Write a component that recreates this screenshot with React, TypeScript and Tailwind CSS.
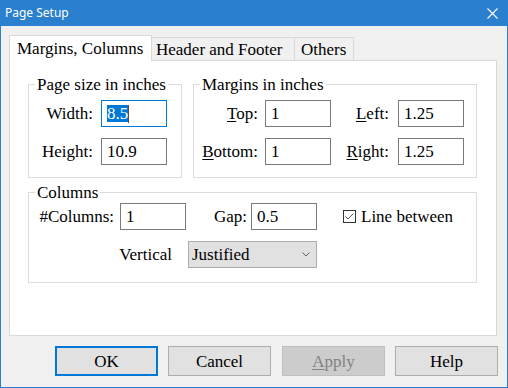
export default function App() {
  const inputBase =
    "h-[27px] w-[66px] border bg-white pl-[5px] flex items-center";
  return (
    <div className="w-[508px] h-[388px] flex flex-col bg-[#f0f0f0] border-x border-b border-[#2b7fcf] [font-family:'Liberation_Serif','Times_New_Roman',serif] text-[17px] text-black leading-none">
      {/* Title bar */}
      <div className="h-[26px] shrink-0 bg-[#2b7fcf] flex items-center justify-between pl-[4px] pr-[9px]">
        <span className="[font-family:'Noto_Sans',sans-serif] text-[12px] text-white">
          Page Setup
        </span>
        <svg width="11" height="11" viewBox="0 0 11 11">
          <path
            d="M0.5 0.5 L10.5 10.5 M10.5 0.5 L0.5 10.5"
            stroke="white"
            strokeWidth="1.1"
          />
        </svg>
      </div>

      {/* Tabs */}
      <div className="pl-[8px] pt-[9px]">
        <div className="flex items-end h-[25px]">
          <div className="relative z-10 -mb-px h-[26px] w-[143px] bg-white border-l border-t border-r border-[#d9d9d9] pl-[7px] pt-[4px]">
            Margins, Columns
          </div>
          <div className="h-[23px] w-[143px] border-t border-r border-[#d9d9d9] pl-[4px] pt-[3px]">
            Header and Footer
          </div>
          <div className="h-[23px] w-[59px] border-t border-r border-[#d9d9d9] pl-[6px] pt-[3px]">
            Others
          </div>
        </div>

        {/* Panel */}
        <div className="w-[488px] h-[276px] bg-white border border-[#d9d9d9] pl-[18px] pt-[23px]">
          <div className="flex gap-[11px]">
            {/* Page size */}
            <div className="relative w-[154px] h-[94px] border border-[#dcdcdc] pt-[15px]">
              <span className="absolute left-[6px] -top-[9px] bg-white px-[2px]">
                Page size in inches
              </span>
              <div className="grid grid-cols-[72px_66px] gap-y-[11px] items-center">
                <div className="text-right pr-[8px]">Width:</div>
                <div className={inputBase + " border-[#0078d7]"}>
                  <span className="bg-[#0078d7] text-white">8.5</span>
                  <span className="w-px h-[18px] bg-[#6b4a2a]"></span>
                </div>
                <div className="text-right pr-[8px]">Height:</div>
                <div className={inputBase + " border-[#7a7a7a]"}>10.9</div>
              </div>
            </div>

            {/* Margins */}
            <div className="relative w-[284px] h-[94px] border border-[#dcdcdc] pt-[15px]">
              <span className="absolute left-[6px] -top-[9px] bg-white px-[2px]">
                Margins in inches
              </span>
              <div className="grid grid-cols-[71px_66px_67px_66px] gap-y-[11px] items-center">
                <div className="text-right pr-[7px]">
                  <span className="underline underline-offset-2">T</span>op:
                </div>
                <div className={inputBase + " border-[#7a7a7a]"}>1</div>
                <div className="text-right pr-[9px]">
                  <span className="underline underline-offset-2">L</span>eft:
                </div>
                <div className={inputBase + " border-[#7a7a7a]"}>1.25</div>
                <div className="text-right pr-[7px]">
                  <span className="underline underline-offset-2">B</span>ottom:
                </div>
                <div className={inputBase + " border-[#7a7a7a]"}>1</div>
                <div className="text-right pr-[9px]">
                  <span className="underline underline-offset-2">R</span>ight:
                </div>
                <div className={inputBase + " border-[#7a7a7a]"}>1.25</div>
              </div>
            </div>
          </div>

          {/* Columns */}
          <div className="relative mt-[14px] w-[449px] h-[91px] border border-[#dcdcdc] pt-[10px]">
            <span className="absolute left-[6px] -top-[9px] bg-white px-[2px]">
              Columns
            </span>
            <div className="flex items-center h-[27px]">
              <div className="w-[91px] text-right pr-[6px]">#Columns:</div>
              <div className={inputBase + " border-[#7a7a7a]"}>1</div>
              <div className="w-[65px] text-right pr-[4px]">Gap:</div>
              <div className={inputBase + " border-[#7a7a7a]"}>0.5</div>
              <div className="ml-[26px] w-[13px] h-[13px] border border-[#333333] bg-white flex items-center justify-center">
                <svg width="11" height="11" viewBox="0 0 11 11">
                  <polyline
                    points="1.5,5.5 4,8 9.5,2.5"
                    fill="none"
                    stroke="#555555"
                    strokeWidth="1"
                  />
                </svg>
              </div>
              <div className="ml-[5px]">Line between</div>
            </div>
            <div className="flex items-center mt-[11px]">
              <div className="w-[159px] text-right pr-[16px]">Vertical</div>
              <div className="w-[129px] h-[27px] bg-[#e1e1e1] border border-[#adadad] flex items-center justify-between pl-[3px] pr-[6px]">
                <span>Justified</span>
                <svg width="8" height="5" viewBox="0 0 8 5">
                  <polyline
                    points="0.5,0.5 4,4 7.5,0.5"
                    fill="none"
                    stroke="#606060"
                    strokeWidth="1"
                  />
                </svg>
              </div>
            </div>
          </div>
        </div>
      </div>

      {/* Buttons */}
      <div className="flex pl-[54px] mt-[10px]">
        <div className="w-[103px] h-[30px] bg-[#e1e1e1] border-2 border-[#0078d7] flex items-center justify-center">
          OK
        </div>
        <div className="ml-[10px] w-[103px] h-[30px] bg-[#e1e1e1] border border-[#adadad] flex items-center justify-center">
          Cancel
        </div>
        <div className="ml-[11px] w-[103px] h-[30px] bg-[#cccccc] border border-[#bfbfbf] flex items-center justify-center text-[#838383]">
          <span>
            <span className="underline underline-offset-2">A</span>pply
          </span>
        </div>
        <div className="ml-[10px] w-[103px] h-[30px] bg-[#e1e1e1] border border-[#adadad] flex items-center justify-center">
          Help
        </div>
      </div>
    </div>
  );
}
